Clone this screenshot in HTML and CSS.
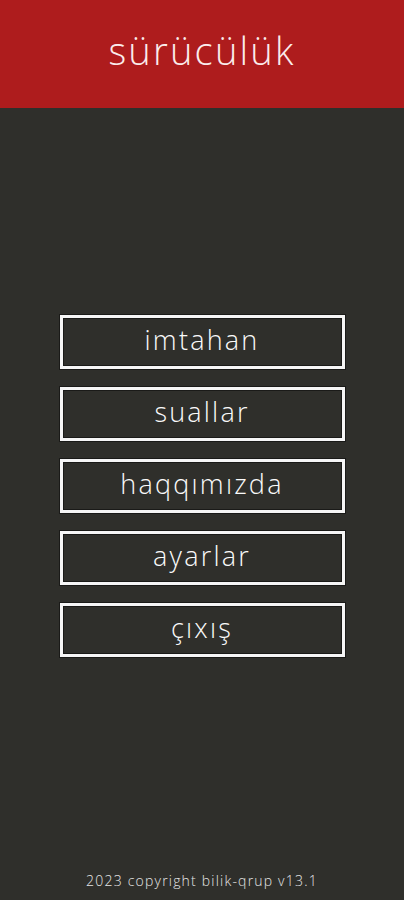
FILE: index.html
```html
<!DOCTYPE html>
<html lang="az">
<head>
    <meta charset="UTF-8">
    <meta name="viewport" content="width=device-width, initial-scale=1.0">
    <title>sürücülük</title>
    <link rel="stylesheet" href="styles.css">
</head>
<body>
    <div class="app">
        <!-- Top title bar -->
        <header class="topbar">
            <h1 class="title">sürücülük</h1>
        </header>

        <!-- Main menu -->
        <main class="menu">
            <button class="menu-btn">imtahan</button>
            <button class="menu-btn">suallar</button>
            <button class="menu-btn">haqqımızda</button>
            <button class="menu-btn">ayarlar</button>
            <button class="menu-btn">çıxış</button>
        </main>

        <footer class="footer">2023 copyright bilik-qrup v13.1</footer>
    </div>
</body>
</html>
```

FILE: styles.css
```css
body {
    margin: 0;
    font-family: "Open Sans", Lato, sans-serif;
    background-color: #2f2f2b;
}
.app {
    display: flex;
    flex-direction: column;
    height: 900px;
    background-color: #2f2f2b;
}
.topbar {
    height: 108px;
    background-color: #ae1c1d;
    display: flex;
    align-items: center;
    justify-content: center;
}
.title {
    margin: 0;
    color: #fbecec;
    font-size: 38px;
    font-weight: 300;
    letter-spacing: 2.2px;
    padding-bottom: 8px;
}
.menu {
    flex: 1;
    display: flex;
    flex-direction: column;
    align-items: center;
    gap: 18px;
    padding-top: 207px;
}
.menu-btn {
    width: 285px;
    height: 54px;
    background-color: #2f2f2b;
    border: 3px solid #f6f6f6;
    box-shadow: 0 0 0 1px #1a1a18, inset 0 0 0 1px #1a1a18;
    color: #fafafa;
    font-family: "Open Sans", Lato, sans-serif;
    font-size: 27px;
    font-weight: 300;
    letter-spacing: 2.2px;
    padding: 0 0 5px;
    cursor: pointer;
}
.footer {
    text-align: center;
    color: #e6e6e6;
    font-size: 14px;
    font-weight: 300;
    letter-spacing: 1.2px;
    padding-bottom: 10px;
}
```
